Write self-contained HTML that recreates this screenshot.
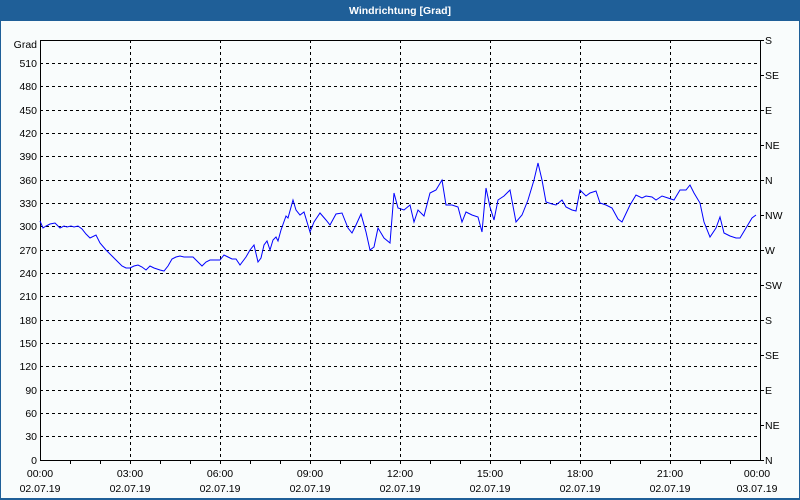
<!DOCTYPE html>
<html><head><meta charset="utf-8"><style>
html,body{margin:0;padding:0;width:800px;height:500px;overflow:hidden;background:#f9fcfc;font-family:"Liberation Sans",sans-serif}
</style></head><body>
<svg width="800" height="500" xmlns="http://www.w3.org/2000/svg" font-family="Liberation Sans, sans-serif" font-size="10.5">
<rect x="0" y="0" width="800" height="500" fill="#f9fcfc"/>
<rect x="0" y="0" width="800" height="21" fill="#1f5f98"/>
<rect x="0" y="21" width="1" height="479" fill="#1f5f98"/>
<rect x="799" y="21" width="1" height="479" fill="#1f5f98"/>
<rect x="0" y="498" width="800" height="2" fill="#1f5f98"/>
<text x="400" y="14" fill="#fff" font-weight="bold" text-anchor="middle" font-size="10.5">Windrichtung [Grad]</text>
<g stroke="#000" stroke-width="1" stroke-dasharray="3,3" fill="none">
<path d="M130.5 40V460M220.5 40V460M310.5 40V460M400.5 40V460M490.5 40V460M580.5 40V460M670.5 40V460"/>
<path d="M40 63.5H760M40 86.5H760M40 110.5H760M40 133.5H760M40 156.5H760M40 180.5H760M40 203.5H760M40 226.5H760M40 250.5H760M40 273.5H760M40 296.5H760M40 320.5H760M40 343.5H760M40 366.5H760M40 390.5H760M40 413.5H760M40 436.5H760"/>
</g>
<g stroke="#000" stroke-width="1" fill="none">
<path d="M40.5 40V460.5H760.5V40M40 40.5H760"/>
<path d="M70.5 460v4M100.5 460v4M130.5 460v4M160.5 460v4M190.5 460v4M220.5 460v4M250.5 460v4M280.5 460v4M310.5 460v4M340.5 460v4M370.5 460v4M400.5 460v4M430.5 460v4M460.5 460v4M490.5 460v4M520.5 460v4M550.5 460v4M580.5 460v4M610.5 460v4M640.5 460v4M670.5 460v4M700.5 460v4M730.5 460v4"/>
<path d="M760 40.5h4M760 75.5h4M760 110.5h4M760 145.5h4M760 180.5h4M760 215.5h4M760 250.5h4M760 285.5h4M760 320.5h4M760 355.5h4M760 390.5h4M760 425.5h4M760 460.5h4"/>
</g>
<g fill="#000" text-anchor="end">
<text x="37" y="48">Grad</text>
<text x="37" y="67">510</text><text x="37" y="90">480</text><text x="37" y="114">450</text><text x="37" y="137">420</text><text x="37" y="160">390</text><text x="37" y="184">360</text><text x="37" y="207">330</text><text x="37" y="230">300</text><text x="37" y="254">270</text><text x="37" y="277">240</text><text x="37" y="300">210</text><text x="37" y="324">180</text><text x="37" y="347">150</text><text x="37" y="370">120</text><text x="37" y="394">90</text><text x="37" y="417">60</text><text x="37" y="440">30</text><text x="37" y="464">0</text>
</g>
<g fill="#000">
<text x="765" y="44">S</text><text x="765" y="79">SE</text><text x="765" y="114">E</text><text x="765" y="149">NE</text><text x="765" y="184">N</text><text x="765" y="219">NW</text><text x="765" y="254">W</text><text x="765" y="289">SW</text><text x="765" y="324">S</text><text x="765" y="359">SE</text><text x="765" y="394">E</text><text x="765" y="429">NE</text><text x="765" y="464">N</text>
</g>
<g fill="#000" text-anchor="middle">
<text x="40" y="477">00:00</text><text x="130" y="477">03:00</text><text x="220" y="477">06:00</text><text x="310" y="477">09:00</text><text x="400" y="477">12:00</text><text x="490" y="477">15:00</text><text x="580" y="477">18:00</text><text x="670" y="477">21:00</text><text x="757" y="477">00:00</text>
<text x="40" y="492">02.07.19</text><text x="130" y="492">02.07.19</text><text x="220" y="492">02.07.19</text><text x="310" y="492">02.07.19</text><text x="400" y="492">02.07.19</text><text x="490" y="492">02.07.19</text><text x="580" y="492">02.07.19</text><text x="670" y="492">02.07.19</text><text x="757" y="492">03.07.19</text>
</g>
<polyline fill="none" stroke="#0000ff" stroke-width="1" points="40,221 43,228 46,226 50,224 55,223 60,228 64,226 67,227 71,226 74,227 78,226 82,229 86,234 90,238 96,235 100,243 106,250 112,256 118,262 122,266 126,268 130,268 134,266 138,265 142,267 146,270 150,266 154,268 160,270 164,271 168,266 172,259 176,257 180,256 184,257 188,257 193,257 198,262 202,266 206,262 210,260 216,260 220,260 224,255 228,257 232,259 236,259 240,265 246,257 250,250 254,245 258,262 261,258 264,245 267,241 270,250 273,240 276,237 278,241 281,230 286,216 288,218 293,200 296,210 300,215 304,212 310,232 314,222 320,213 326,220 330,225 336,214 342,213 348,228 352,233 356,225 361,214 366,232 370,250 374,247 378,228 384,238 390,243 394,193 398,208 404,210 410,205 414,222 418,210 424,216 430,193 436,190 442,180 446,205 452,205 458,207 462,222 466,212 472,215 478,217 482,232 486,188 490,207 494,220 498,200 504,196 510,190 516,222 522,215 528,200 534,180 538,163 542,180 546,202 552,204 556,205 562,200 566,207 572,210 576,211 580,190 586,196 590,193 596,191 600,203 606,205 612,208 618,219 622,222 630,205 636,195 642,198 646,196 652,197 656,200 662,196 668,198 674,200 680,190 686,190 690,185 694,193 700,203 704,222 710,237 716,228 720,217 724,233 730,236 736,238 740,238 746,228 752,218 756,215"/>
</svg>
</body></html>
